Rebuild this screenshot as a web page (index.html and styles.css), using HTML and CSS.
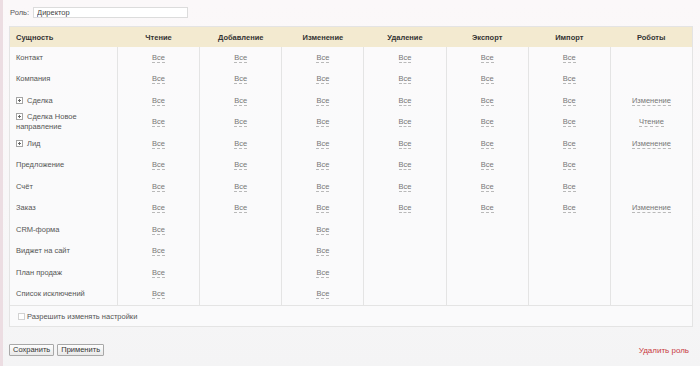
FILE: index.html
```html
<!DOCTYPE html>
<html lang="ru">

<head>
  <meta charset="UTF-8">
  <meta name="viewport" content="width=device-width, initial-scale=1.0">
  <title>Права доступа</title>
  <link rel="stylesheet" href="styles.css">
</head>

<body>
  <div class="page">
    <div class="role-row">
      <label for="role">Роль:</label>
      <input type="text" id="role" value="Директор">
    </div>

    <table class="perms">
      <colgroup>
        <col class="col-entity">
        <col span="7">
      </colgroup>
      <thead>
        <tr>
          <th class="entity">Сущность</th>
          <th>Чтение</th>
          <th>Добавление</th>
          <th>Изменение</th>
          <th>Удаление</th>
          <th>Экспорт</th>
          <th>Импорт</th>
          <th>Роботы</th>
        </tr>
      </thead>
      <tbody>
        <tr>
          <td class="entity">Контакт</td>
          <td><a>Все</a></td><td><a>Все</a></td><td><a>Все</a></td>
          <td><a>Все</a></td><td><a>Все</a></td><td><a>Все</a></td><td></td>
        </tr>
        <tr>
          <td class="entity">Компания</td>
          <td><a>Все</a></td><td><a>Все</a></td><td><a>Все</a></td>
          <td><a>Все</a></td><td><a>Все</a></td><td><a>Все</a></td><td></td>
        </tr>
        <tr>
          <td class="entity"><span class="expand"><svg width="7" height="7" viewBox="0 0 7 7"><rect x="0.5" y="0.5" width="6" height="6" fill="#fff" stroke="#a5a5a5"/><path d="M2 3.5h3M3.5 2v3" stroke="#666"/></svg></span>Сделка</td>
          <td><a>Все</a></td><td><a>Все</a></td><td><a>Все</a></td>
          <td><a>Все</a></td><td><a>Все</a></td><td><a>Все</a></td><td><a>Изменение</a></td>
        </tr>
        <tr>
          <td class="entity"><span class="expand"><svg width="7" height="7" viewBox="0 0 7 7"><rect x="0.5" y="0.5" width="6" height="6" fill="#fff" stroke="#a5a5a5"/><path d="M2 3.5h3M3.5 2v3" stroke="#666"/></svg></span>Сделка Новое направление</td>
          <td><a>Все</a></td><td><a>Все</a></td><td><a>Все</a></td>
          <td><a>Все</a></td><td><a>Все</a></td><td><a>Все</a></td><td><a>Чтение</a></td>
        </tr>
        <tr>
          <td class="entity"><span class="expand"><svg width="7" height="7" viewBox="0 0 7 7"><rect x="0.5" y="0.5" width="6" height="6" fill="#fff" stroke="#a5a5a5"/><path d="M2 3.5h3M3.5 2v3" stroke="#666"/></svg></span>Лид</td>
          <td><a>Все</a></td><td><a>Все</a></td><td><a>Все</a></td>
          <td><a>Все</a></td><td><a>Все</a></td><td><a>Все</a></td><td><a>Изменение</a></td>
        </tr>
        <tr>
          <td class="entity">Предложение</td>
          <td><a>Все</a></td><td><a>Все</a></td><td><a>Все</a></td>
          <td><a>Все</a></td><td><a>Все</a></td><td><a>Все</a></td><td></td>
        </tr>
        <tr>
          <td class="entity">Счёт</td>
          <td><a>Все</a></td><td><a>Все</a></td><td><a>Все</a></td>
          <td><a>Все</a></td><td><a>Все</a></td><td><a>Все</a></td><td></td>
        </tr>
        <tr>
          <td class="entity">Заказ</td>
          <td><a>Все</a></td><td><a>Все</a></td><td><a>Все</a></td>
          <td><a>Все</a></td><td><a>Все</a></td><td><a>Все</a></td><td><a>Изменение</a></td>
        </tr>
        <tr>
          <td class="entity">CRM-форма</td>
          <td><a>Все</a></td><td></td><td><a>Все</a></td>
          <td></td><td></td><td></td><td></td>
        </tr>
        <tr>
          <td class="entity">Виджет на сайт</td>
          <td><a>Все</a></td><td></td><td><a>Все</a></td>
          <td></td><td></td><td></td><td></td>
        </tr>
        <tr>
          <td class="entity">План продаж</td>
          <td><a>Все</a></td><td></td><td><a>Все</a></td>
          <td></td><td></td><td></td><td></td>
        </tr>
        <tr>
          <td class="entity">Список исключений</td>
          <td><a>Все</a></td><td></td><td><a>Все</a></td>
          <td></td><td></td><td></td><td></td>
        </tr>
      </tbody>
    </table>

    <div class="settings">
      <label><span class="check"></span>Разрешить изменять настройки</label>
    </div>

    <div class="actions">
      <div class="buttons">
        <button type="button">Сохранить</button>
        <button type="button">Применить</button>
      </div>
      <a class="delete">Удалить роль</a>
    </div>
  </div>
</body>

</html>
```

FILE: styles.css
```css
html,
body {
  margin: 0;
  height: 100%;
}

body {
  font-family: "Liberation Sans", Arial, sans-serif;
  font-size: 7.5px;
  color: #555;
  background: linear-gradient(180deg, #fbf8f9 0%, #f8f7f8 55%, #f4f4f5 100%);
  border-left: 3px solid #ecdde2;
  box-sizing: border-box;
}

.page {
  padding: 7px 7px 0 6px;
}

.role-row {
  display: flex;
  align-items: center;
  gap: 4px;
  height: 11px;
  margin-bottom: 8px;
  padding-left: 1px;
}

.role-row input {
  width: 155px;
  height: 11px;
  box-sizing: border-box;
  padding: 0 3px;
  border: 1px solid #dcdcdc;
  background: #fff;
  font-family: inherit;
  font-size: 7.5px;
  color: #444;
}

.perms {
  width: 684px;
  table-layout: fixed;
  border-collapse: collapse;
  border: 1px solid #e4e4e4;
  background: rgba(250, 250, 251, 0.85);
}

.perms .col-entity {
  width: 108px;
}

.perms th {
  height: 20px;
  padding: 0;
  background: #f3ead0;
  color: #333;
  font-weight: bold;
  text-align: center;
}

.perms td {
  height: 21.5px;
  padding: 0;
  text-align: center;
  border-left: 1px solid #e4e4e4;
  line-height: 10px;
}

.perms .entity {
  text-align: left;
  padding-left: 6px;
  border-left: none;
}

.perms td.entity {
  padding-right: 20px;
}

.perms a {
  color: #777;
  border-bottom: 1px dashed #b9b9b9;
  cursor: pointer;
}

.expand {
  display: inline-block;
  width: 7px;
  height: 7px;
  margin-right: 4px;
  vertical-align: -1px;
}

.expand svg {
  display: block;
}

.settings {
  height: 21px;
  display: flex;
  align-items: center;
  padding-left: 8px;
  width: 684px;
  box-sizing: border-box;
  border: 1px solid #e4e4e4;
  border-top: none;
  background: rgba(250, 250, 251, 0.85);
}

.settings label {
  display: flex;
  align-items: center;
}

.check {
  width: 5px;
  height: 5px;
  margin-right: 2px;
  border: 1px solid #d2d2d2;
  background: #fff;
}

.actions {
  display: flex;
  justify-content: space-between;
  align-items: center;
  margin-top: 17px;
  width: 684px;
}

.buttons {
  display: flex;
  gap: 3px;
}

.buttons button {
  height: 12px;
  padding: 0 3px;
  border: 1px solid #a8a8a8;
  border-radius: 1px;
  background: linear-gradient(#fdfdfd, #e9e9e9);
  font-family: inherit;
  font-size: 7.5px;
  color: #333;
  line-height: 10px;
  cursor: pointer;
}

.delete {
  color: #c83a42;
  font-size: 8px;
  margin-right: 4px;
  margin-top: 1px;
  cursor: pointer;
}
```
